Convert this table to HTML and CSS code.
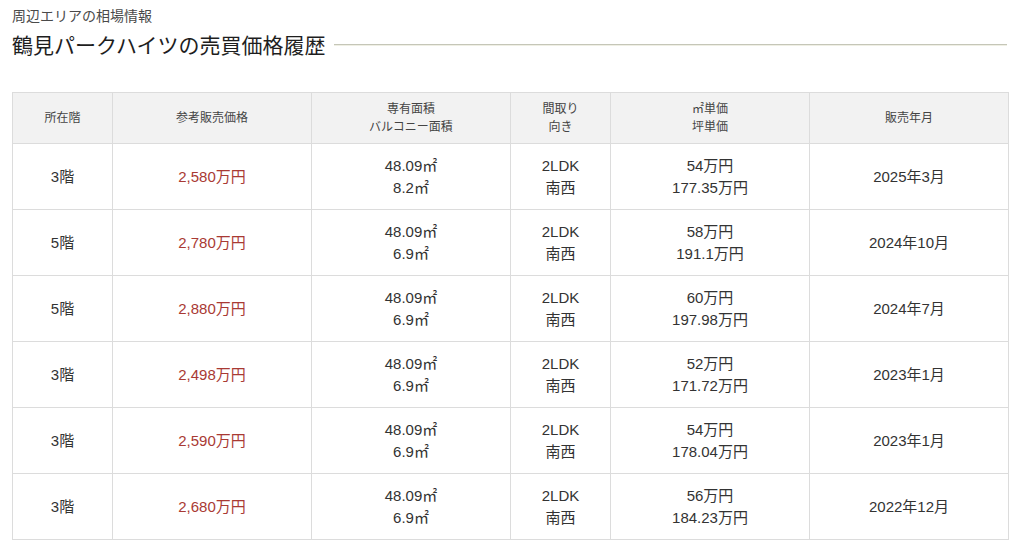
FILE: index.html
```html
<!DOCTYPE html>
<html lang="ja">
<head>
<meta charset="utf-8">
<link rel="stylesheet" href="styles.css">
</head>
<body>
<div class="wrap">
  <p class="sub">周辺エリアの相場情報</p>
  <div class="title-row">
    <h2 class="title">鶴見パークハイツの売買価格履歴</h2>
    <span class="rule"></span>
  </div>
  <table class="hist">
    <colgroup>
      <col class="c1"><col class="c2"><col class="c3"><col class="c4"><col class="c5"><col class="c6">
    </colgroup>
    <thead>
      <tr>
        <th>所在階</th>
        <th>参考販売価格</th>
        <th>専有面積<br>バルコニー面積</th>
        <th>間取り<br>向き</th>
        <th>㎡単価<br>坪単価</th>
        <th>販売年月</th>
      </tr>
    </thead>
    <tbody>
      <tr><td>3階</td><td class="price">2,580万円</td><td>48.09㎡<br>8.2㎡</td><td>2LDK<br>南西</td><td>54万円<br>177.35万円</td><td>2025年3月</td></tr>
      <tr><td>5階</td><td class="price">2,780万円</td><td>48.09㎡<br>6.9㎡</td><td>2LDK<br>南西</td><td>58万円<br>191.1万円</td><td>2024年10月</td></tr>
      <tr><td>5階</td><td class="price">2,880万円</td><td>48.09㎡<br>6.9㎡</td><td>2LDK<br>南西</td><td>60万円<br>197.98万円</td><td>2024年7月</td></tr>
      <tr><td>3階</td><td class="price">2,498万円</td><td>48.09㎡<br>6.9㎡</td><td>2LDK<br>南西</td><td>52万円<br>171.72万円</td><td>2023年1月</td></tr>
      <tr><td>3階</td><td class="price">2,590万円</td><td>48.09㎡<br>6.9㎡</td><td>2LDK<br>南西</td><td>54万円<br>178.04万円</td><td>2023年1月</td></tr>
      <tr><td>3階</td><td class="price">2,680万円</td><td>48.09㎡<br>6.9㎡</td><td>2LDK<br>南西</td><td>56万円<br>184.23万円</td><td>2022年12月</td></tr>
    </tbody>
  </table>
</div>
</body>
</html>
```
FILE: styles.css
```css
* { box-sizing: border-box; }
html, body { margin: 0; padding: 0; background: #fff; }
body {
  font-family: "Liberation Sans", "Noto Sans CJK JP", sans-serif;
  color: #333;
}
.wrap { padding: 7px 17px 0 12px; }
.sub {
  margin: 0;
  font-size: 14px;
  line-height: 18px;
  color: #4a4a4a;
}
.title-row {
  display: flex;
  align-items: center;
  gap: 8px;
  margin-top: 7px;
}
.title {
  margin: 0;
  font-size: 21px;
  line-height: 28px;
  font-weight: normal;
  color: #1e1e1e;
  white-space: nowrap;
}
.rule {
  flex: 1;
  height: 2px;
  margin-top: -3px;
  border-top: 1px solid #c5c6b8;
  border-bottom: 1px solid #efefe4;
}
.hist {
  margin-top: 32px;
  width: 996px;
  border-collapse: collapse;
  table-layout: fixed;
}
.c1 { width: 100px; }
.c2 { width: 199px; }
.c3 { width: 199px; }
.c4 { width: 100px; }
.c5 { width: 199px; }
.c6 { width: 199px; }
.hist th, .hist td {
  border: 1px solid #dcdcdc;
  text-align: center;
  vertical-align: middle;
  padding: 0;
}
.hist th {
  background: #f2f2f2;
  font-weight: normal;
  font-size: 12px;
  line-height: 18px;
  color: #444;
  height: 51px;
}
.hist td {
  font-size: 15px;
  line-height: 22px;
  color: #333;
  height: 66px;
}
.hist td.price { color: #a93a34; }
```
